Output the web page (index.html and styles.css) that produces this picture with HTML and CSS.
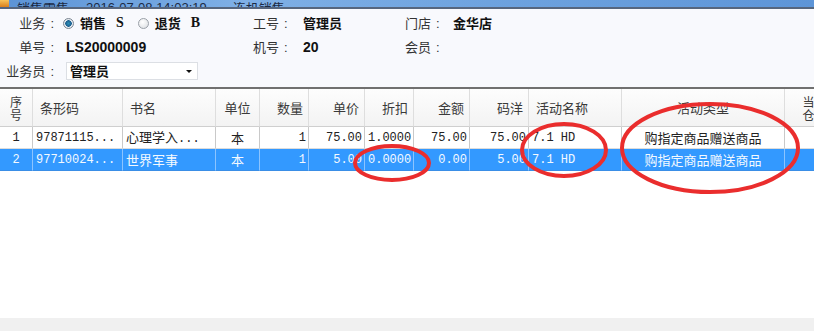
FILE: index.html
```html
<!DOCTYPE html>
<html>
<head>
<meta charset="utf-8">
<link rel="stylesheet" href="styles.css">
</head>
<body>
<div class="window">
  <div class="titlebar">
    <span class="ticon"></span>
    <span class="ttext t1">销售零售</span>
    <span class="ttext t2">2016-07-08 14:02:19</span>
    <span class="ttext t3">连机销售</span>
  </div>
  <div class="form">
    <div class="frow">
      <span class="lbl">业务<span class="colon">:</span></span>
      <span class="val v1">
        <span class="radio on"></span><b class="opt">销售<i>S</i></b>
        <span class="radio"></span><b class="opt">退货<i>B</i></b>
      </span>
      <span class="lbl2">工号<span class="colon">:</span></span>
      <span class="val v2"><b>管理员</b></span>
      <span class="lbl3">门店<span class="colon">:</span></span>
      <span class="val"><b>金华店</b></span>
    </div>
    <div class="frow">
      <span class="lbl">单号<span class="colon">:</span></span>
      <span class="val v1"><b class="code">LS20000009</b></span>
      <span class="lbl2">机号<span class="colon">:</span></span>
      <span class="val v2"><b class="code">20</b></span>
      <span class="lbl3">会员<span class="colon">:</span></span>
      <span class="val"></span>
    </div>
    <div class="frow">
      <span class="lbl">业务员<span class="colon">:</span></span>
      <div class="select"><b>管理员</b><span class="arrow"></span></div>
    </div>
  </div>
  <div class="grid">
    <table>
      <colgroup>
        <col class="c-no"><col class="c-bar"><col class="c-name"><col class="c-unit"><col class="c-qty"><col class="c-price"><col class="c-disc"><col class="c-amt"><col class="c-my"><col class="c-act"><col class="c-type"><col class="c-wh">
      </colgroup>
      <thead>
        <tr>
          <th class="ctr two">序<br>号</th>
          <th class="lft">条形码</th>
          <th class="lft">书名</th>
          <th class="ctr">单位</th>
          <th class="rgt">数量</th>
          <th class="rgt">单价</th>
          <th class="rgt">折扣</th>
          <th class="rgt">金额</th>
          <th class="rgt">码洋</th>
          <th class="lft">活动名称</th>
          <th class="ctr">活动类型</th>
          <th class="ctr two">当前<br>仓库</th>
        </tr>
      </thead>
      <tbody>
        <tr>
          <td class="ctr">1</td>
          <td class="lft">97871115...</td>
          <td class="lft"><span class="cn">心理学入</span>...</td>
          <td class="ctr cn">本</td>
          <td class="rgt">1</td>
          <td class="rgt">75.00</td>
          <td class="rgt">1.0000</td>
          <td class="rgt">75.00</td>
          <td class="rgt">75.00</td>
          <td class="lft">7.1 HD</td>
          <td class="ctr cn">购指定商品赠送商品</td>
          <td></td>
        </tr>
        <tr class="sel">
          <td class="ctr">2</td>
          <td class="lft">97710024...</td>
          <td class="lft cn">世界军事</td>
          <td class="ctr cn">本</td>
          <td class="rgt">1</td>
          <td class="rgt">5.00</td>
          <td class="rgt">0.0000</td>
          <td class="rgt">0.00</td>
          <td class="rgt">5.00</td>
          <td class="lft">7.1 HD</td>
          <td class="ctr cn">购指定商品赠送商品</td>
          <td></td>
        </tr>
      </tbody>
    </table>
  </div>
  <div class="footer"></div>
  <svg class="marks" width="814" height="331" viewBox="0 0 814 331">
    <ellipse cx="392" cy="163" rx="37" ry="17"></ellipse>
    <ellipse cx="564" cy="150" rx="42" ry="26"></ellipse>
    <ellipse cx="710" cy="148" rx="88" ry="44"></ellipse>
  </svg>
</div>
</body>
</html>
```
FILE: styles.css
```css
* { box-sizing: border-box; }
html, body { margin: 0; padding: 0; background: #fff; }
body { width: 814px; height: 331px; overflow: hidden; font-family: "Noto Sans CJK SC", "Liberation Sans", sans-serif; }

.window { position: relative; width: 814px; height: 331px; overflow: hidden; display: flex; flex-direction: column; }

.titlebar {
  height: 9px; flex: none; overflow: hidden;
  background: linear-gradient(to right, #5b93d6, #7fb0e6 30%, #6ea3df 60%, #5d95d8);
  border-bottom: 2px solid #56667e;
  display: flex; align-items: flex-end; padding-left: 0;
}
.ticon { width: 9px; height: 7px; background: linear-gradient(#f7c35a, #d97f1c); flex: none; }
.ttext { font-size: 13px; line-height: 13px; height: 13px; color: #1c2a44; margin-bottom: -7px; white-space: nowrap; font-family: "Noto Sans CJK SC", sans-serif; }
.t1 { margin-left: 8px; }
.t2 { margin-left: 17px; font-family: "Liberation Sans", sans-serif; }
.t3 { margin-left: 26px; }

.form { height: 80px; flex: none; background: #f8f9fd; padding-top: 2px; border-bottom: 2px solid #707070; }
.frow { height: 24px; display: flex; align-items: center; font-size: 13px; color: #333; }
.lbl { width: 54px; text-align: right; flex: none; line-height: 16px; }
.lbl2 { width: 50px; flex: none; line-height: 16px; }
.lbl3 { width: 48px; flex: none; line-height: 16px; }
.colon { font-family: "Liberation Sans", sans-serif; margin-left: 5px; }
.val { line-height: 16px; color: #111; display: flex; align-items: center; }
.v1 { width: 199px; padding-left: 9px; flex: none; }
.v2 { width: 102px; flex: none; }
.val b { font-weight: bold; }
.code { font-family: "Liberation Sans", sans-serif; font-size: 14px; padding-left: 3px; }
.v2 .code { padding-left: 0; }
.opt { display: inline-flex; align-items: center; }
.opt i { font-style: normal; font-family: "Liberation Serif", serif; font-weight: bold; font-size: 14px; margin-left: 10px; }
.radio {
  width: 11px; height: 11px; border-radius: 50%; flex: none;
  border: 1px solid #9aa0a8; background: radial-gradient(circle at 40% 35%, #ffffff, #d9dce0);
  margin-right: 6px;
}
.radio.on { background: radial-gradient(circle, #2d8fb6 0, #1d5f8f 3px, #e9eef3 3.5px, #d5dae0 100%); border-color: #7c8692; }
.opt + .radio { margin-left: 14px; }

.select {
  margin-left: 12px; width: 132px; height: 18px; background: #fff; border: 1px solid #dcdfe4;
  display: flex; align-items: center; justify-content: space-between; padding: 0 4px 0 3px;
  font-size: 13px; color: #111; line-height: 16px;
}
.arrow { width: 0; height: 0; border-left: 3px solid transparent; border-right: 3px solid transparent; border-top: 3px solid #111; margin-right: 1px; }

.grid { height: 229px; flex: none; background: #fff; overflow: hidden; }
table { border-collapse: separate; border-spacing: 0; table-layout: fixed; width: 845px; }
.c-no { width: 33px; } .c-bar { width: 90px; } .c-name { width: 93px; } .c-unit { width: 44px; }
.c-qty { width: 49px; } .c-price { width: 56px; } .c-disc { width: 49px; } .c-amt { width: 56px; }
.c-my { width: 59px; } .c-act { width: 93px; } .c-type { width: 163px; } .c-wh { width: 60px; }

th {
  height: 38px; font-weight: normal; font-size: 13px; color: #3a3a3a; line-height: 16px;
  background: linear-gradient(#fdfdfd, #f3f3f3);
  border-right: 1px solid #dedede; border-bottom: 1px solid #cfcfcf; padding: 0 6px; white-space: nowrap;
}
th.two { line-height: 13px; font-size: 12px; padding: 0; }
td {
  height: 22px; font-family: "Liberation Mono", monospace; font-size: 12px; color: #222;
  border-right: 1px solid #c9c9c9; border-bottom: 1px solid #dcdcdc; padding: 0 3px; white-space: nowrap; overflow: hidden; line-height: 16px;
}
td.cn, .cn { font-family: "Noto Sans CJK SC", sans-serif; font-size: 13px; }
.lft { text-align: left; }
th.lft { padding-left: 7px; }
.ctr { text-align: center; }
.rgt { text-align: right; }
th.rgt { padding-right: 5px; }
td.rgt { padding-right: 2px; }
tr.sel td { background: #3399ff; color: #f4f9ff; border-right-color: #8cc4ff; border-bottom-color: #3a8ee6; }

.footer { flex: 1; background: #f0f0f0; }

.marks { position: absolute; left: 0; top: 0; pointer-events: none; }
.marks ellipse { fill: none; stroke: #ea2d2d; stroke-width: 4; }
```
